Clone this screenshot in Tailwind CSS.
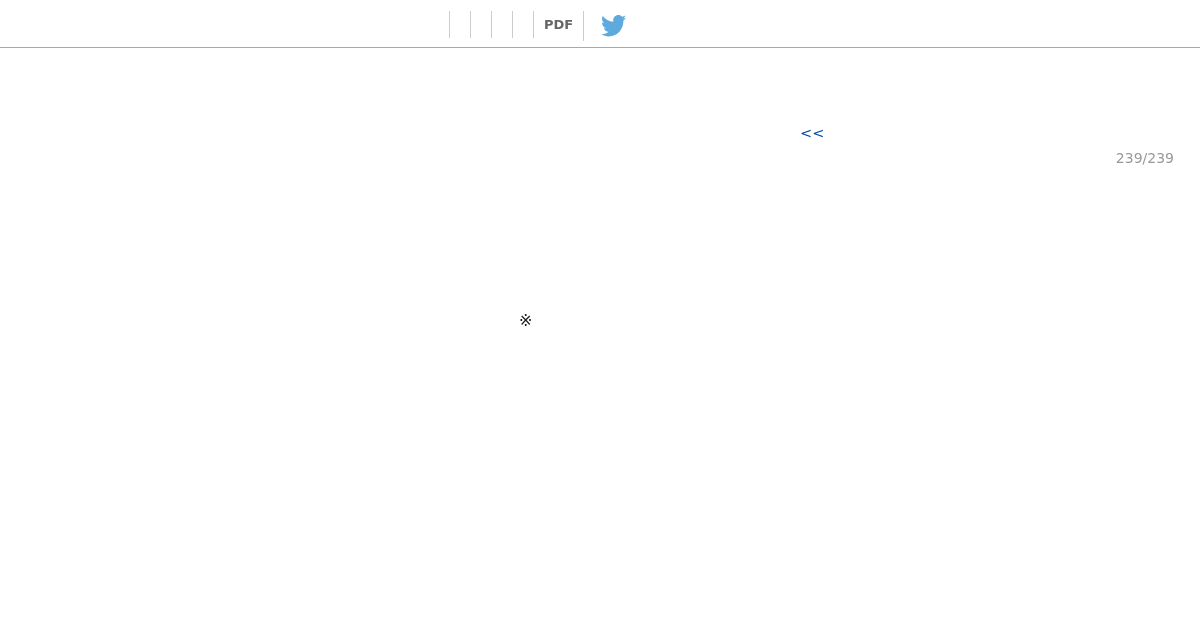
<!DOCTYPE html>
<html lang="ja">
<head>
<meta charset="utf-8">
<script src="https://cdn.jsdelivr.net/npm/@tailwindcss/browser@4"></script>
<title>239/239</title>
</head>
<body class="bg-white font-['DejaVu_Sans','Noto_Sans_CJK_JP',sans-serif]">
<div class="w-[1200px] h-[630px] overflow-hidden">
  <header class="h-[48px] border-b border-[#a8a8a8] flex items-start pl-[449px] pt-[11px] will-change-transform">
    <div class="w-[21px] h-[27px] border-l border-[#cccccc]"></div>
    <div class="w-[21px] h-[27px] border-l border-[#cccccc]"></div>
    <div class="w-[21px] h-[27px] border-l border-[#cccccc]"></div>
    <div class="w-[21px] h-[27px] border-l border-[#cccccc]"></div>
    <div class="w-[50px] h-[27px] border-l border-[#cccccc] pl-[10px] text-[13px] leading-[27px] font-bold text-[#666666]">PDF</div>
    <div class="h-[30px] border-l border-[#cccccc] pl-[17px] pt-[4px]">
      <svg class="w-[25px] h-[22px]" viewBox="0 0 24 20" preserveAspectRatio="none" fill="#5ea9dd" aria-hidden="true"><path d="M24 2.4c-.9.4-1.800.7-2.800.8 1-.6 1.800-1.600 2.200-2.700-1 .6-2 1-3.100 1.200C19.300.7 18 .1 16.600.1c-2.700 0-4.900 2.200-4.900 4.900 0 .4 0 .8.100 1.100C7.700 5.900 4.100 4 1.700.9c-.4.700-.7 1.600-.7 2.500 0 1.700.9 3.200 2.200 4.100-.8 0-1.600-.2-2.200-.6v.1c0 2.400 1.700 4.400 3.900 4.800-.4.100-.8.200-1.300.2-.3 0-.6 0-.9-.1.600 2 2.400 3.400 4.600 3.400-1.700 1.300-3.800 2.100-6.100 2.100-.4 0-.8 0-1.200-.1 2.200 1.400 4.800 2.200 7.500 2.200 9.100 0 14-7.500 14-14v-.6c1-.7 1.800-1.600 2.500-2.500z"/></svg>
    </div>
  </header>
  <main class="pt-[76px] will-change-transform">
    <div class="pl-[800px] text-[14.5px] leading-[18px]"><a class="text-[#00439b]">&lt;&lt;</a></div>
    <div class="mt-[8px] pr-[26px] text-right text-[14px] leading-[16px] text-[#999999]">239/239</div>
    <div class="mt-[146px] pl-[519px] text-[16px] leading-[18px] text-[#222222]">※</div>
  </main>
</div>
</body>
</html>
